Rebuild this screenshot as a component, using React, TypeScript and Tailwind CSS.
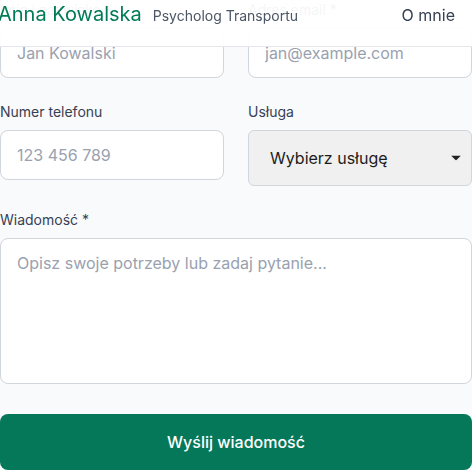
import React from 'react';

const inputCls =
  'block w-full h-[50px] px-4 rounded-lg border border-gray-300 bg-white text-base text-gray-900 placeholder:text-gray-400 outline-none';

const Field: React.FC<{ label: string; children: React.ReactNode }> = ({ label, children }) => (
  <div>
    <label className="block text-sm text-gray-700 mb-2">{label}</label>
    {children}
  </div>
);

export default function App() {
  return (
    <div className="min-h-screen bg-gray-50 font-['Inter',sans-serif] overflow-hidden">
      <header className="fixed top-0 inset-x-0 z-10 h-[47px] bg-white/95 border-b border-gray-200 flex items-baseline pr-[17px]">
        <span className="-ml-[2px] text-xl leading-7 text-emerald-700">Anna Kowalska</span>
        <span className="ml-[11px] text-sm text-gray-600">Psycholog Transportu</span>
        <nav className="ml-auto text-base text-gray-700">O mnie</nav>
      </header>

      <form className="flex flex-col">
        <div className="grid grid-cols-2 gap-x-6 gap-y-6">
          <Field label="Imię i nazwisko *">
            <input className={inputCls} placeholder="Jan Kowalski" />
          </Field>
          <Field label="Adres email *">
            <input className={inputCls} placeholder="jan@example.com" />
          </Field>
          <Field label="Numer telefonu">
            <input className={inputCls} placeholder="123 456 789" />
          </Field>
          <Field label="Usługa">
            <div className="relative">
              <select
                defaultValue=""
                className="block w-full h-[56px] appearance-none pl-[21px] pr-10 rounded-md border border-gray-300 bg-[#f0f0f0] text-base text-[#1c1c1c] outline-none"
              >
                <option value="">Wybierz usługę</option>
              </select>
              <svg
                className="pointer-events-none absolute right-[11px] top-1/2 -translate-y-1/2"
                width="10"
                height="5"
                viewBox="0 0 10 5"
              >
                <path d="M0 0h10L5 5z" fill="#222" />
              </svg>
            </div>
          </Field>
        </div>

        <div className="mt-6">
          <label className="block text-sm text-gray-700 mb-2">Wiadomość *</label>
          <textarea
            rows={5}
            className="block w-full h-[146px] px-4 py-3 rounded-lg border border-gray-300 bg-white text-base text-gray-900 placeholder:text-gray-400 outline-none resize-none"
            placeholder="Opisz swoje potrzeby lub zadaj pytanie..."
          />
        </div>

        <button
          type="button"
          className="mt-[30px] h-14 w-full rounded-lg bg-[#06785a] text-white text-base font-medium"
        >
          Wyślij wiadomość
        </button>
      </form>
    </div>
  );
}
